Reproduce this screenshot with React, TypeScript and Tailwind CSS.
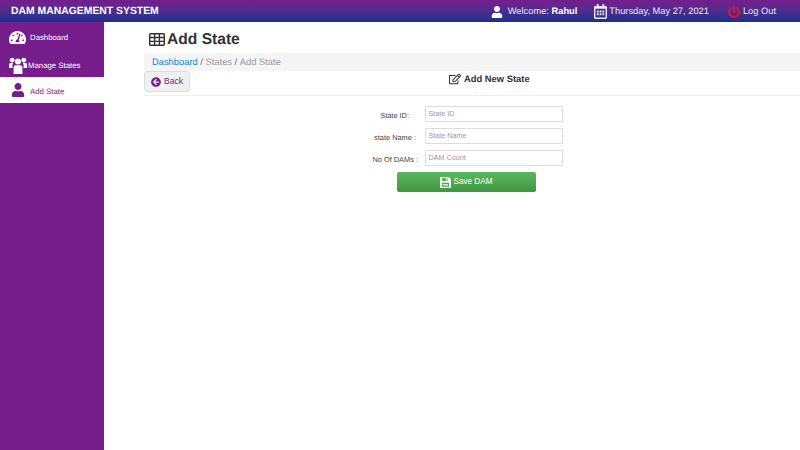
import { FaArrowCircleLeft, FaPowerOff, FaRegCalendarAlt, FaRegEdit, FaTachometerAlt, FaUser } from "react-icons/fa";

const fields = [
  { label: "State ID:", placeholder: "State ID", pad: "pr-[16px]" },
  { label: "state Name :", placeholder: "State Name", pad: "pr-[9px]" },
  { label: "No Of DAMs :", placeholder: "DAM Count", pad: "pr-[7px]" },
];

function TableIcon() {
  return (
    <svg viewBox="0 0 16 13" className="mr-[2px] h-[13px] w-[16px]" fill="none" stroke="#333" strokeWidth="1.4">
      <rect x="0.7" y="0.7" width="14.6" height="11.6" rx="1" />
      <path d="M0.7 4.5H15.3M0.7 8.4H15.3M5.6 0.7V12.3M10.4 0.7V12.3" />
    </svg>
  );
}

function GroupIcon() {
  return (
    <svg viewBox="0 0 18 17" className="mr-[1px] h-[17px] w-[18px]" fill="currentColor">
      <circle cx="3.2" cy="3.2" r="2.4" />
      <circle cx="14.8" cy="3.2" r="2.4" />
      <path d="M0 11V7.6C0 6.6.8 6 1.8 6h2.4C3.6 6.8 3.4 7.6 3.4 8.6V11H0zM18 11V7.6C18 6.6 17.2 6 16.2 6h-2.4c.6.8.8 1.6.8 2.6V11H18z" />
      <circle cx="9" cy="4.6" r="3" />
      <path d="M4.6 17V10.2C4.6 9 5.6 8.2 6.8 8.2h4.4c1.2 0 2.2.8 2.2 2V17H4.6z" />
    </svg>
  );
}

function FloppyIcon() {
  return (
    <svg viewBox="0 0 12 12" className="mr-[2px] h-[11px] w-[11px]" fill="#fff">
      <path
        fillRule="evenodd"
        d="M0 0h9.6L12 2.4V12H0V0zM2.4 1v3.4h6V1h-6zM6.4 1.4h1.4v2.4H6.4V1.4zM2 6.4V11h8V6.4H2z"
      />
      <path d="M3 7.6h6v.8H3zM3 9.2h6v.8H3z" />
    </svg>
  );
}

function Sidebar() {
  return (
    <aside className="w-[104px] shrink-0 bg-[#761d8c] text-[7.8px]">
      <div className="flex h-[28px] items-center pl-[9px] pt-[2px] text-white">
        <FaTachometerAlt className="mr-[4px] h-[17px] w-[17px]" />
        <span className="mt-[1px]">Dashboard</span>
      </div>
      <div className="flex h-[27px] items-center pl-[9px] pt-[3px] text-white">
        <GroupIcon />
        <span className="mt-[1px]">Manage States</span>
      </div>
      <div className="flex h-[26px] items-center bg-white pl-[11px] text-[#761d8c]">
        <FaUser className="mr-[5px] h-[14px] w-[14px]" />
        <span className="mt-[4px]">Add State</span>
      </div>
    </aside>
  );
}

export default function App() {
  return (
    <div className="flex h-[450px] w-[800px] flex-col overflow-hidden bg-white font-['Liberation_Sans',sans-serif] text-[#333] [text-rendering:geometricPrecision]">
      <header className="flex h-[22px] shrink-0 items-center bg-gradient-to-b from-[#751d8c] to-[#14308d] pl-[11px] pr-[24px] pt-[1px] text-white">
        <span className="text-[10.4px] font-bold">DAM MANAGEMENT SYSTEM</span>
        <div className="ml-auto flex items-center text-[9.3px] text-[#e8e8f2]">
          <FaUser className="mr-[5px] h-[12px] w-[12px] text-white" />
          <span>Welcome: <b className="text-white">Rahul</b></span>
          <FaRegCalendarAlt className="ml-[17px] mr-[2px] h-[15px] w-[13px]" />
          <span>Thursday, May 27, 2021</span>
          <FaPowerOff className="ml-[19px] mr-[3px] h-[12px] w-[12px] text-[#f0102a]" />
          <span>Log Out</span>
        </div>
      </header>

      <div className="flex min-h-0 flex-1">
        <Sidebar />
        <main className="flex-1 pl-[40px]">
          <h1 className="flex h-[31px] items-center pl-[5px] pt-[3px] text-[15.6px] font-bold leading-none">
            <TableIcon />
            <span className="mt-[2px]">Add State</span>
          </h1>
          <div className="flex h-[18px] items-center bg-[#f5f5f5] pl-[8px] text-[9.35px] text-[#999]">
            <span className="text-[#0a82cf]">Dashboard</span>
            <span className="whitespace-pre text-[#666]"> / </span>
            <span>States</span>
            <span className="whitespace-pre text-[#666]"> / </span>
            <span>Add State</span>
          </div>

          <div className="flex h-[25px] border-b border-[#eee]">
            <button className="flex h-[21px] w-[46px] items-center justify-center rounded-[3px] border border-[#ddd] bg-[#f0f0f0] text-[8.5px] text-[#761d8c]">
              <FaArrowCircleLeft className="mr-[3px] h-[10px] w-[10px]" />
              Back
            </button>
            <h2 className="ml-[259px] mt-[1px] flex h-[14px] items-center text-[9.4px] font-bold">
              <FaRegEdit className="mr-[3px] h-[12px] w-[12px]" />
              Add New State
            </h2>
          </div>

          <form className="flex flex-col gap-[6px] pt-[10px]">
            {fields.map((f) => (
              <div key={f.label} className="flex h-[16px] items-center">
                <label className={`mt-[3px] w-[281px] text-right text-[7.4px] text-[#444] ${f.pad}`}>{f.label}</label>
                <input
                  readOnly
                  placeholder={f.placeholder}
                  className="h-[16px] w-[138px] rounded-[1px] border border-[#ddd] px-[2.5px] pb-[1px] text-[7.2px] placeholder:text-[#999]"
                />
              </div>
            ))}
            <button
              type="button"
              className="ml-[253px] flex h-[20px] w-[139px] items-center justify-center rounded-[2px] bg-gradient-to-b from-[#5cb85c] to-[#419641] text-[8.2px] text-white"
            >
              <FloppyIcon />
              Save DAM
            </button>
          </form>
        </main>
      </div>
    </div>
  );
}
